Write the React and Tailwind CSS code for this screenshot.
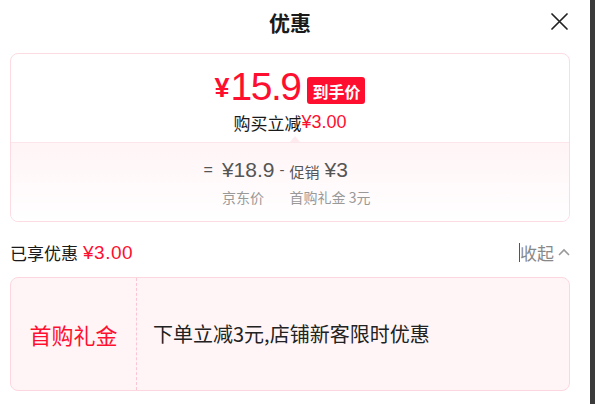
import React from "react";

const CJK = { fontFamily: '"Noto Sans CJK SC", "Liberation Sans", sans-serif' };
const NUM = { fontFamily: '"Liberation Sans", "Noto Sans CJK SC", sans-serif' };

export default function App() {
  return (
    <div className="w-[595px] h-[404px] flex bg-white overflow-hidden" style={CJK}>
      <div className="w-[590px] px-[10px]">
        <div className="w-[560px]">
          {/* header */}
          <div className="relative h-[44px] flex items-center justify-center">
            <span className="text-[21px] font-bold text-[#1a1a1a] leading-none">优惠</span>
            <svg className="absolute right-[2px] top-[13px]" width="17" height="17" viewBox="0 0 17 17">
              <path d="M1 1 L16 16 M16 1 L1 16" stroke="#222" strokeWidth="1.7" strokeLinecap="round" />
            </svg>
          </div>

          {/* card 1 */}
          <div className="mt-[9px] h-[169px] border border-[#fcdbe2] rounded-[8px] overflow-hidden flex flex-col">
            <div className="h-[88px] flex flex-col items-center relative">
              <div className="flex items-end mt-[17px] h-[32px]">
                <span className="text-[#ff0f2f] text-[27px] font-bold leading-none mb-[1px]" style={NUM}>¥</span>
                <span className="text-[#ff0f2f] text-[39px] leading-none tracking-[-1.5px] ml-[1px] mb-[-3px]" style={NUM}>15.9</span>
                <span className="ml-[7px] mb-[-1px] h-[27px] px-[5px] bg-[#ff0f2f] rounded-[3px] text-white text-[16px] font-bold flex items-center leading-none">到手价</span>
              </div>
              <div className="mt-[10px] text-[17px] leading-none text-[#1a1a1a] flex items-center">
                <span>购买立减</span>
                <span className="text-[#ff0f2f] text-[18px]" style={NUM}>¥3.00</span>
              </div>
              <svg className="absolute bottom-0 left-[279px]" width="10" height="7" viewBox="0 0 10 7">
                <path d="M0 7 L5 1 L10 7 Z" fill="#fdebef" />
              </svg>
            </div>
            <div className="flex-1 border-t border-[#fde6eb] bg-gradient-to-b from-[#fff4f6] to-white flex justify-center">
              <div className="flex items-start mt-[16px] ml-[-6px] text-[#555] leading-none">
                <span className="text-[16px] mt-[3px] mr-[9px]" style={NUM}>=</span>
                <div className="flex flex-col">
                  <span className="text-[21px]" style={NUM}>¥18.9</span>
                  <span className="mt-[10px] text-[14px] text-[#999]">京东价</span>
                </div>
                <span className="text-[15px] mt-[3px] mx-[5px]" style={NUM}>-</span>
                <div className="flex flex-col">
                  <div className="flex items-end">
                    <span className="text-[15px] mr-[5px] mb-[1px]">促销</span>
                    <span className="text-[21px]" style={NUM}>¥3</span>
                  </div>
                  <span className="mt-[10px] text-[14px] text-[#999]">首购礼金 3元</span>
                </div>
              </div>
            </div>
          </div>

          {/* enjoyed row */}
          <div className="mt-[21px] h-[18px] flex items-center justify-between">
            <div className="text-[17px] leading-none flex items-center">
              <span className="text-[#1a1a1a]">已享优惠</span>
              <span className="text-[#ff0f2f] text-[19px] ml-[5px] tracking-[0.5px]" style={NUM}>¥3.00</span>
            </div>
            <div className="flex items-center text-[17px] text-[#888] leading-none">
              <span className="w-[1px] h-[19px] bg-[#555]"></span>
              <span>收起</span>
              <svg className="ml-[4px]" width="12" height="8" viewBox="0 0 12 8">
                <path d="M1 7 L6 2 L11 7" stroke="#999" strokeWidth="1.6" fill="none" />
              </svg>
            </div>
          </div>

          {/* card 2 */}
          <div className="mt-[16px] h-[114px] border border-[#fcd7df] bg-[#fff5f7] rounded-[8px] flex">
            <div className="w-[126px] border-r border-dashed border-[#fbc6d2] flex items-center justify-center">
              <span className="text-[22px] text-[#ff0f2f] leading-none">首购礼金</span>
            </div>
            <div className="flex-1 flex items-center pl-[16px]">
              <span className="text-[20px] text-[#222] leading-none">下单立减3元,店铺新客限时优惠</span>
            </div>
          </div>
        </div>
      </div>
      <div className="w-[5px] h-full bg-[#3b3b3b]"></div>
    </div>
  );
}
